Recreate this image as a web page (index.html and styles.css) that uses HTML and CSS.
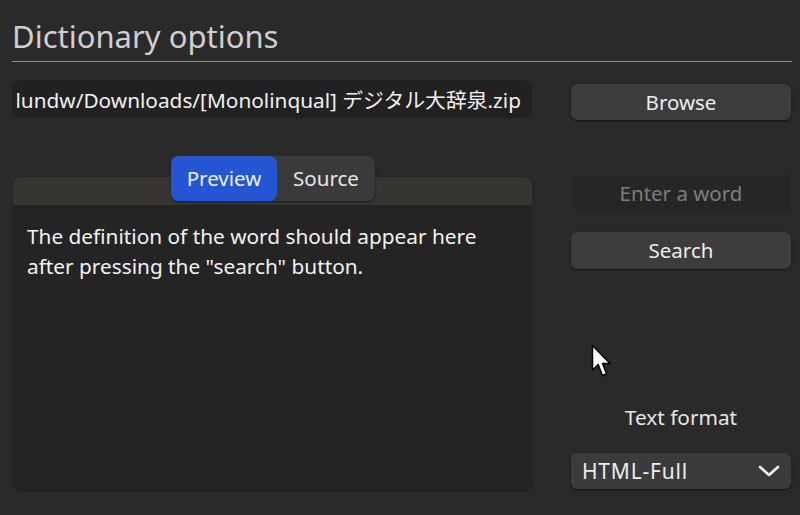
FILE: index.html
```html
<!DOCTYPE html>
<html>
<head>
<meta charset="utf-8">
<link rel="stylesheet" href="styles.css">
</head>
<body>
<div class="page">
  <h1 class="title">Dictionary options</h1>
  <div class="divider"></div>
  <div class="main">
    <div class="left">
      <div class="path-field"><span class="path-text">lundw/Downloads/[Monolinqual] デジタル大辞泉.zip</span></div>
      <div class="tabs">
        <div class="tab tab-active">Preview</div>
        <div class="tab">Source</div>
      </div>
      <div class="panel">
        <div class="panel-head"></div>
        <div class="panel-body">The definition of the word should appear here<br>after pressing the "search" button.</div>
      </div>
    </div>
    <div class="right">
      <div class="btn btn-browse">Browse</div>
      <div class="word-field">Enter a word</div>
      <div class="btn btn-search">Search</div>
      <div class="spacer"></div>
      <div class="label">Text format</div>
      <div class="select">
        <span class="select-text">HTML-Full</span>
        <svg class="chev" width="22" height="14" viewBox="0 0 22 14"><path d="M2 3 L11 11 L20 3" fill="none" stroke="#f2f2f2" stroke-width="2.6" stroke-linecap="round" stroke-linejoin="round"/></svg>
      </div>
    </div>
  </div>
  <svg class="cursor" width="22" height="36" viewBox="0 0 22 36"><path d="M1.5 1.5 L1.5 26 L7.2 20.6 L11.4 31.5 L15.6 29.8 L11.5 19.4 L19 19.4 Z" fill="#ffffff" stroke="#000000" stroke-width="1.5" stroke-linejoin="round"/></svg>
</div>
</body>
</html>
```
FILE: styles.css
```css
* { box-sizing: border-box; }
html, body { margin: 0; padding: 0; }
body {
  background: #2a2a2a;
  font-family: "Noto Sans", "Open Sans", "Noto Sans CJK JP", sans-serif;
  color: #ececec;
  width: 800px;
  height: 515px;
  overflow: hidden;
}
.page {
  position: relative;
  padding: 0 8px 0 12px;
}
.title {
  margin: 0;
  padding-top: 16px;
  font-size: 31px;
  font-weight: 400;
  line-height: 40px;
  color: #cfcfcf;
}
.divider {
  margin-top: 5px;
  height: 1px;
  background: #8c8c8c;
}
.main {
  display: flex;
  gap: 39px;
  margin-top: 18px;
}
.left {
  width: 520px;
  display: flex;
  flex-direction: column;
}
.path-field {
  height: 38px;
  background: #212121;
  border-radius: 8px;
  display: flex;
  align-items: center;
  justify-content: flex-end;
  overflow: hidden;
  white-space: nowrap;
  padding: 0 11px 0 4px;
  font-size: 20.8px;
  color: #f0f0f0;
}
.path-text { flex: none; }
.tabs {
  margin-top: 38px;
  align-self: center;
  display: flex;
  height: 45px;
  background: #3a3a3a;
  border-radius: 8px;
  box-shadow: 0 1px 2px rgba(0,0,0,0.5);
  position: relative;
  z-index: 1;
  margin-left: 2px;
}
.tab {
  display: flex;
  align-items: center;
  justify-content: center;
  font-size: 20.5px;
  color: #e6e6e6;
  padding-bottom: 2px;
}
.tab-active {
  width: 106px;
  background: #2456d3;
  border-radius: 8px;
  color: #eef2ff;
}
.tab:not(.tab-active) { width: 98px; }
.panel {
  margin-top: -24px;
  height: 313px;
  border-radius: 8px;
  overflow: hidden;
  background: #242424;
  box-shadow: 0 1px 2px rgba(0,0,0,0.35);
  margin-left: 1px;
}
.panel-head {
  height: 28px;
  background: #363531;
}
.panel-body {
  padding: 16px 14px;
  font-size: 20.8px;
  line-height: 30px;
  color: #f2f2f2;
  white-space: nowrap;
}
.right {
  width: 220px;
  display: flex;
  flex-direction: column;
}
.btn {
  height: 36px;
  background: #3c3c3c;
  border-radius: 6px;
  box-shadow: 0 1px 2px rgba(0,0,0,0.6);
  display: flex;
  align-items: center;
  justify-content: center;
  font-size: 20.5px;
  color: #ededed;
  padding-bottom: 1px;
}
.btn-browse { margin-top: 4px; }
.word-field {
  margin-top: 55px;
  height: 37px;
  background: #262626;
  border-radius: 6px;
  display: flex;
  align-items: center;
  justify-content: center;
  font-size: 20.5px;
  color: #7e7e7e;
  padding-bottom: 1px;
}
.btn-search { margin-top: 20px; height: 37px; }
.spacer { height: 133px; }
.label {
  text-align: center;
  font-size: 20.8px;
  line-height: 30px;
  color: #e6e6e6;
}
.select {
  margin-top: 21px;
  height: 36px;
  background: #3b3b3b;
  border-radius: 6px;
  box-shadow: 0 1px 2px rgba(0,0,0,0.6);
  display: flex;
  align-items: center;
  justify-content: space-between;
  padding: 0 11px 1px 11px;
  font-size: 21px;
  color: #ededed;
}
.select-text { letter-spacing: 0.8px; }
.chev { display: block; }
.cursor {
  position: absolute;
  left: 591px;
  top: 344px;
}
```
